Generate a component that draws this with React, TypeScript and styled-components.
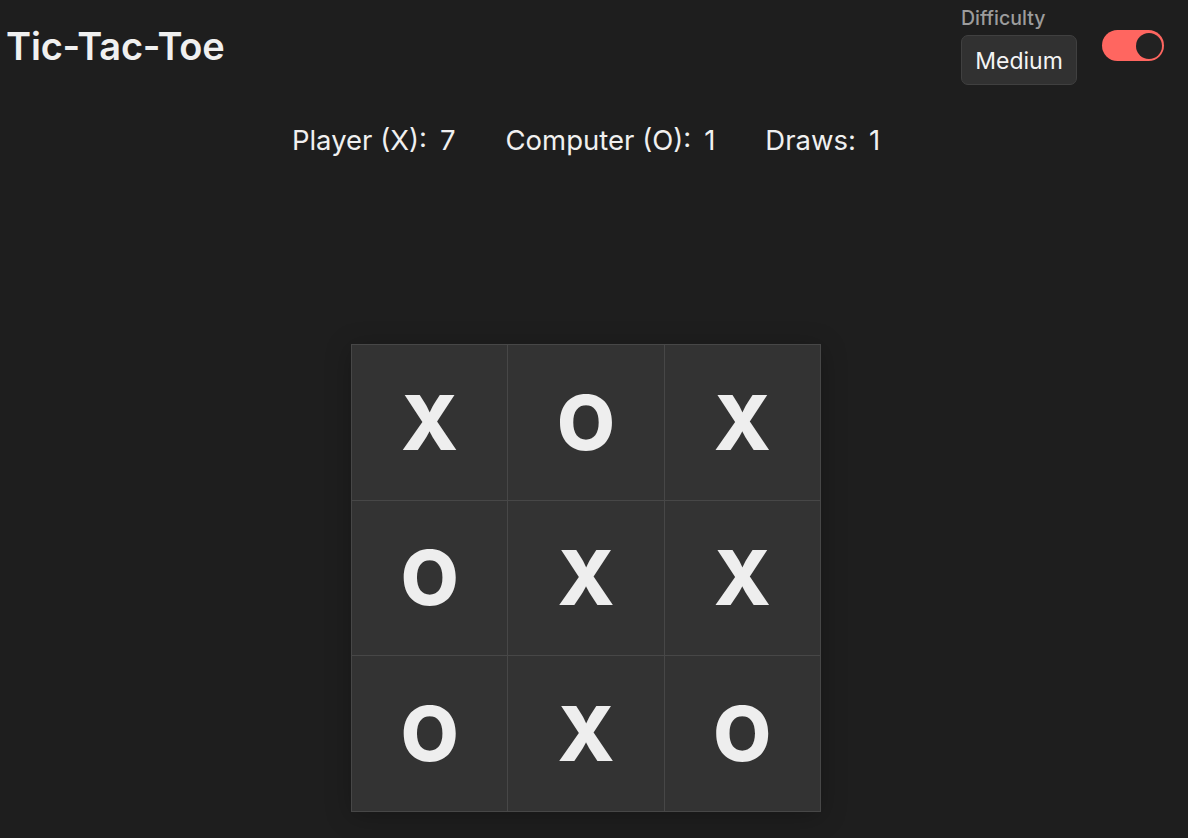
import React from "react";
import styled, { createGlobalStyle } from "styled-components";

const GlobalStyle = createGlobalStyle`
  html, body {
    margin: 0;
    padding: 0;
    background: #1e1e1e;
  }
  body {
    font-family: Inter, "Noto Sans", sans-serif;
    color: #eeeeee;
  }
`;

const Page = styled.div`
  min-height: 838px;
  padding: 0 24px 0 8px;
  box-sizing: border-box;
  display: flex;
  flex-direction: column;
`;

const Header = styled.header`
  display: flex;
  justify-content: space-between;
  align-items: flex-start;
  height: 92px;
`;

const Title = styled.h1`
  margin: 24px 0 0;
  font-size: 38px;
  font-weight: 600;
  line-height: 44px;
  letter-spacing: -0.2px;
  color: #f0f0f0;
  transform: translateX(-2px);
`;

const Controls = styled.div`
  display: flex;
  align-items: flex-start;
  gap: 25px;
  padding-top: 6px;
`;

const Field = styled.label`
  display: flex;
  flex-direction: column;
  gap: 5px;
`;

const FieldLabel = styled.span`
  font-size: 19.5px;
  line-height: 24px;
  color: #9c9c9c;
  font-weight: 500;
`;

const Select = styled.div`
  width: 116px;
  height: 50px;
  box-sizing: border-box;
  background: #313131;
  border: 1px solid #404040;
  border-radius: 7px;
  display: flex;
  align-items: center;
  justify-content: center;
  padding-top: 2px;
  font-size: 23px;
  font-weight: 400;
  color: #f4f4f4;
`;

const Toggle = styled.div<{ $on: boolean }>`
  margin-top: 24px;
  width: 62px;
  height: 31px;
  border-radius: 16px;
  background: ${(p) => (p.$on ? "#ff6660" : "#555")};
  display: flex;
  align-items: center;
  justify-content: ${(p) => (p.$on ? "flex-end" : "flex-start")};
  padding: 0 2px;
  box-sizing: border-box;
`;

const Knob = styled.div`
  width: 26px;
  height: 26px;
  border-radius: 50%;
  background: #222222;
`;

const Stats = styled.div`
  display: flex;
  justify-content: center;
  gap: 50px;
  margin-top: 31px;
  font-size: 27.5px;
  line-height: 34px;
  color: #f0f0f0;
`;

const Stat = styled.div`
  display: flex;
  gap: 13px;
`;

const BoardWrap = styled.div`
  display: flex;
  justify-content: center;
  margin-top: 187px;
`;

const Board = styled.div`
  width: 470px;
  height: 468px;
  box-sizing: border-box;
  display: grid;
  grid-template-columns: repeat(3, 1fr);
  grid-template-rows: repeat(3, 1fr);
  gap: 1px;
  padding: 1px;
  background: #474747;
  box-shadow: 0 4px 24px rgba(0, 0, 0, 0.25);
`;

const Cell = styled.button`
  border: none;
  margin: 0;
  padding: 0;
  background: #333333;
  color: #eeeeee;
  font-family: Inter, "Noto Sans", sans-serif;
  font-size: 75px;
  font-weight: 800;
  display: flex;
  align-items: center;
  justify-content: center;
  cursor: pointer;
`;

const board = ["X", "O", "X", "O", "X", "X", "O", "X", "O"];

export default function App() {
  return (
    <>
      <GlobalStyle />
      <Page>
        <Header>
          <Title>Tic-Tac-Toe</Title>
          <Controls>
            <Field>
              <FieldLabel>Difficulty</FieldLabel>
              <Select>Medium</Select>
            </Field>
            <Toggle $on>
              <Knob />
            </Toggle>
          </Controls>
        </Header>
        <Stats>
          <Stat>
            <span>Player (X):</span>
            <span>7</span>
          </Stat>
          <Stat>
            <span>Computer (O):</span>
            <span>1</span>
          </Stat>
          <Stat>
            <span>Draws:</span>
            <span>1</span>
          </Stat>
        </Stats>
        <BoardWrap>
          <Board>
            {board.map((v, i) => (
              <Cell key={i}>{v}</Cell>
            ))}
          </Board>
        </BoardWrap>
      </Page>
    </>
  );
}
